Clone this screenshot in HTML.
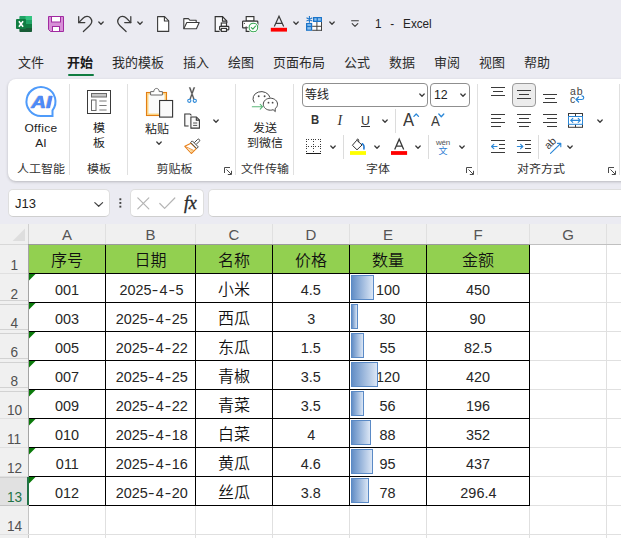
<!DOCTYPE html>
<html lang="zh-CN"><head><meta charset="utf-8"><title>1 - Excel</title>
<style>
*{box-sizing:border-box;margin:0;padding:0}
html,body{width:621px;height:538px;overflow:hidden}
body{background:#ebebf2;font-family:"Liberation Sans","Noto Sans CJK SC",sans-serif;color:#242424;position:relative}
.abs,.t,.ic,.sep,.lbl,.cell,.ch,.rh,.gl,.bl{position:absolute}
.t{white-space:nowrap;line-height:1}
.tab{position:absolute;top:55px;font-size:13px;line-height:15px;color:#2b2b2b;white-space:nowrap}
.tab.on{font-weight:bold;color:#1a1a1a}
.ribbon{position:absolute;left:8px;top:79px;width:640px;height:102px;background:#fff;border-radius:8px;box-shadow:0 1px 3px rgba(0,0,0,.22)}
.sep{width:1px;background:#e0e0e0;top:84px;height:91px}
.lbl{font-size:12px;line-height:14px;color:#333;top:162px;white-space:nowrap;transform:translateX(-50%) scaleY(.92);transform-origin:50% 80%}
.bt{position:absolute;font-size:12px;line-height:14px;color:#222;white-space:nowrap;transform:translateX(-50%) scaleY(.92);transform-origin:50% 80%;text-align:center}
.bt2{line-height:16.300px;transform-origin:50% 0}
.box{position:absolute;background:#fff;border:1px solid #c8c8c8;border-radius:4px}
.grid{position:absolute;left:0;top:224px;width:621px;height:314px;background:#fff}
.ch{top:224px;height:20px;font-size:15px;line-height:22px;text-align:center;color:#555;background:#f0f0f0}
.rh{left:0;width:28px;font-size:15.500px;text-align:center;color:#505050;line-height:1}
.rh span{display:inline-block;transform:scaleX(.88);position:relative;left:.3px}
.gl{background:#e0e0e0}
.bl{background:#000}
.cell{font-size:16px;line-height:29px;text-align:center;color:#111;white-space:nowrap;font-weight:400;padding-top:1px}
.n{display:inline-block;font-size:15.500px;transform:scaleX(.93);transform-origin:50% 50%;color:#262626}
.n i{display:inline-block;font-style:normal;width:8.620px;text-align:center;transform:scaleX(1.35)}
.zh{font-weight:350}
.hd{background:#92d050}
svg{position:absolute;overflow:visible}
</style></head><body>

<!-- title bar icons -->
<svg style="left:16px;top:16px" width="16" height="16" viewBox="0 0 16 16">
  <path d="M4.2 0h11a.8.8 0 0 1 .8.800V4H3.400V.8a.8.8 0 0 1 .8-.8z" fill="#21a366"/>
  <rect x="9.700" y="0" width="6.300" height="4" fill="#33c481"/><path d="M15.200 0a.8.8 0 0 1 .8.800V4H9.700V0z" fill="#33c481"/>
  <rect x="3.400" y="4" width="6.300" height="4" fill="#107c41"/><rect x="9.700" y="4" width="6.300" height="4" fill="#21a366"/>
  <rect x="3.400" y="8" width="6.300" height="4" fill="#185c37"/><rect x="9.700" y="8" width="6.300" height="4" fill="#107c41"/>
  <path d="M3.400 12H16v3.200a.8.800 0 0 1-.8.800h-11a.8.800 0 0 1-.8-.8z" fill="#185c37"/>
  <rect x="0" y="3" width="10" height="10" rx="0.900" fill="#107c41"/>
  <path d="M2.900 5.200 L7.100 10.800 M7.100 5.200 L2.900 10.800" stroke="#fff" stroke-width="1.600" fill="none"/>
</svg>
<svg style="left:48px;top:16px" width="16" height="16" viewBox="0 0 16 16">
  <path d="M0.500 0.500 H15.500 V15.500 H2.500 L0.500 13.500 Z" fill="#d78fd7" stroke="#a12aa1" stroke-width="1"/>
  <rect x="3.500" y="0.500" width="9" height="5.500" fill="#fff" stroke="#a12aa1" stroke-width="1"/>
  <rect x="4.500" y="10.500" width="7" height="5" fill="#fff" stroke="#a12aa1" stroke-width="1"/>
</svg>
<svg style="left:78px;top:16px" width="16" height="16" viewBox="0 0 16 16" fill="none" stroke="#3b3b3b" stroke-width="1.250" stroke-linecap="round" stroke-linejoin="round">
  <path d="M0.700 0.500 V6.600 H6.800"/><path d="M0.700 6.600 L5 2.300 C7.300 0 10.600 -0.300 12.500 2 C14.500 4.500 13.800 7.500 11.500 9.700 L5.400 15.500"/>
</svg>
<svg style="left:98px;top:21px" width="6" height="5" viewBox="0 0 6 5" fill="none" stroke="#3b3b3b" stroke-width="1.300" stroke-linecap="round" stroke-linejoin="round"><path d="M0.800 1 L3 3.200 L5.200 1"/></svg>
<svg style="left:116px;top:16px" width="16" height="16" viewBox="0 0 16 16" fill="none" stroke="#3b3b3b" stroke-width="1.250" stroke-linecap="round" stroke-linejoin="round">
  <g transform="translate(15.500 0) scale(-1 1)"><path d="M0.700 0.500 V6.600 H6.800"/><path d="M0.700 6.600 L5 2.300 C7.300 0 10.600 -0.300 12.500 2 C14.500 4.500 13.800 7.500 11.500 9.700 L5.400 15.500"/></g>
</svg>
<svg style="left:137px;top:21px" width="6" height="5" viewBox="0 0 6 5" fill="none" stroke="#3b3b3b" stroke-width="1.300" stroke-linecap="round" stroke-linejoin="round"><path d="M0.800 1 L3 3.200 L5.200 1"/></svg>
<svg style="left:157px;top:16px" width="13" height="16" viewBox="0 0 13 16" fill="#fff" stroke="#3b3b3b" stroke-width="1.100" stroke-linejoin="round">
  <path d="M0.600 0.600 H7.600 L11.700 4.800 V15.400 H0.600 Z"/><path d="M7.400 0.800 V5 H11.600" fill="none"/>
</svg>
<svg style="left:183px;top:18px" width="17" height="12" viewBox="0 0 17 12" fill="#fff" stroke="#3b3b3b" stroke-width="1.100" stroke-linejoin="round">
  <path d="M0.800 10.800 V0.600 H5.400 L7 2.300 H13.200 V4.500"/><path d="M0.800 10.800 L3.800 4.500 H16.200 L13.400 10.800 Z"/>
</svg>
<svg style="left:214px;top:16px" width="16" height="16" viewBox="0 0 16 16" fill="none" stroke="#333" stroke-width="1.150" stroke-linejoin="miter">
  <path d="M1.200 0.600 H8.500 L12.800 5.100 V15.400 H1.200 Z" fill="#fafafc" stroke="none"/><path d="M5.600 15.400 H1.200 V0.600 H8.500 L12.800 5.100 V7"/><path d="M8.500 0.600 V5.100 H12.800"/>
  <rect x="7.300" y="7" width="5.200" height="3.400" fill="#fff"/><rect x="5.600" y="10.400" width="9.200" height="3.400" rx="0.500" fill="#fff"/><rect x="7.300" y="12.400" width="5.200" height="3" fill="#fff"/>
</svg>
<svg style="left:242px;top:16px" width="17" height="16" viewBox="0 0 17 16" fill="none" stroke="#333" stroke-width="1.150" stroke-linejoin="miter">
  <rect x="4.200" y="0.600" width="7.700" height="4.500" fill="#fff"/><rect x="0.600" y="5.100" width="15.200" height="6.800" rx="0.600" fill="#fff"/><path d="M4.200 10.400 V15.400 H8" fill="#fff"/>
  <rect x="1.900" y="6.900" width="1" height="1" fill="#333" stroke="none"/>
  <circle cx="11.400" cy="11.500" r="4.500" fill="#fff" stroke="#fff" stroke-width="2.200"/>
  <circle cx="11.400" cy="11.500" r="4.300" fill="#fff" stroke="#3aa856" stroke-width="1.100"/><path d="M9.300 11.600 L10.900 13.200 L13.500 10.100" stroke="#3aa856" stroke-width="1.100" stroke-linecap="round" stroke-linejoin="round"/>
</svg>
<svg style="left:270px;top:15px" width="18" height="17" viewBox="0 0 18 17">
  <path d="M4.300 11.600 L9 1.200 L13.700 11.600 M5.900 8.300 H12.100" fill="none" stroke="#3b3b3b" stroke-width="1.200"/>
  <rect x="0.800" y="12.800" width="16.200" height="3.800" fill="#f00"/>
</svg>
<svg style="left:293px;top:21px" width="6" height="5" viewBox="0 0 6 5" fill="none" stroke="#3b3b3b" stroke-width="1.300" stroke-linecap="round" stroke-linejoin="round"><path d="M0.800 1 L3 3.200 L5.200 1"/></svg>
<svg style="left:306px;top:16px" width="16" height="15" viewBox="0 0 16 15">
  <rect x="6.100" y="5.800" width="9.900" height="9" fill="#fff"/>
  <rect x="7" y="1" width="9" height="5" fill="#1b74c9"/>
  <rect x="8.300" y="2.200" width="2.300" height="2.500" fill="#8cc0ee"/><rect x="11.900" y="2.200" width="2.900" height="2.500" fill="#8cc0ee"/>
  <rect x="0" y="7" width="6.200" height="7.800" fill="#1b74c9"/>
  <rect x="1.300" y="8.100" width="3.600" height="1.700" fill="#8cc0ee"/><rect x="1.300" y="11.100" width="3.600" height="2.500" fill="#8cc0ee"/>
  <path d="M6.200 10.300 H16 M10.900 6 V14.800 M15.500 6 V14.800 M6.200 14.300 H16" stroke="#444" stroke-width="1" fill="none"/>
  <path d="M3.400 0 V6.800 M0.500 1.700 L6.300 5.100 M6.300 1.700 L0.500 5.100" stroke="#1b74c9" stroke-width="1.100" fill="none"/>
</svg>
<svg style="left:329px;top:21px" width="6" height="5" viewBox="0 0 6 5" fill="none" stroke="#3b3b3b" stroke-width="1.300" stroke-linecap="round" stroke-linejoin="round"><path d="M0.800 1 L3 3.200 L5.200 1"/></svg>
<svg style="left:351px;top:20px" width="8" height="8" viewBox="0 0 8 8" fill="none" stroke="#3b3b3b" stroke-width="1.100" stroke-linecap="round" stroke-linejoin="round"><path d="M0.600 0.700 H7.400 M1.200 3.600 L4 6.400 L6.800 3.600"/></svg>

<div class="t" style="left:375px;top:16px;font-size:13px;line-height:15px;color:#222;white-space:pre;word-spacing:1.300px;transform:scaleX(.9);transform-origin:0 0">1  -  Excel</div>
<div class="tab" style="left:18px">文件</div>
<div class="tab on" style="left:67px">开始</div>
<div class="tab" style="left:112px">我的模板</div>
<div class="tab" style="left:183px">插入</div>
<div class="tab" style="left:228px">绘图</div>
<div class="tab" style="left:273px">页面布局</div>
<div class="tab" style="left:344px">公式</div>
<div class="tab" style="left:389px">数据</div>
<div class="tab" style="left:434px">审阅</div>
<div class="tab" style="left:479px">视图</div>
<div class="tab" style="left:524px">帮助</div>
<div class="abs" style="left:67.500px;top:73.500px;width:26px;height:2.500px;background:#107c41;border-radius:1px"></div>
<div class="ribbon"></div>
<div class="sep" style="left:69px"></div>
<div class="sep" style="left:127px"></div>
<div class="sep" style="left:235px"></div>
<div class="sep" style="left:293px"></div>
<div class="sep" style="left:477px"></div>
<div class="sep" style="left:619px"></div>
<div class="lbl" style="left:41px">人工智能</div>
<div class="lbl" style="left:99px">模板</div>
<div class="lbl" style="left:174.5px">剪贴板</div>
<div class="lbl" style="left:265px">文件传输</div>
<div class="lbl" style="left:378px">字体</div>
<div class="lbl" style="left:541px">对齐方式</div>
<div class="bt bt2" style="left:41px;top:120.84px"><span style="letter-spacing:.35px">Office</span><br>AI</div>
<div class="bt bt2" style="left:99px;top:120.84px">模<br>板</div>
<div class="bt bt2" style="left:265px;top:120.84px">发送<br>到微信</div>
<div class="bt" style="left:157px;top:122px">粘贴</div>
<div class="box" style="left:302px;top:83px;width:126px;height:24px;border-color:#8f8f8f"></div>
<div class="box" style="left:430px;top:83px;width:40px;height:24px;border-color:#8f8f8f"></div>
<div class="t" style="left:305px;top:89px;font-size:12px;color:#222">等线</div>
<div class="t" style="left:433.500px;top:88px;font-size:13px;color:#222;transform:scaleX(.95);transform-origin:0 0">12</div>
<!-- AI icon -->
<svg style="left:25px;top:85px" width="33" height="33" viewBox="0 0 33 33">
  <path d="M16 31 A14.500 14.500 0 1 1 27.500 25.300 V31 Z" fill="#fff" stroke="#4f9bfa" stroke-width="2" stroke-linejoin="miter"/>
</svg>
<div class="t" style="left:31.100px;top:91.600px;font-size:17.300px;line-height:20px;font-weight:bold;font-style:italic;color:#4b8df8;-webkit-text-stroke:.4px #4b8df8;text-shadow:-.5px -.4px 0 #f7cf6a,.5px .4px 0 #9a5cf0;transform:scaleX(1.185);transform-origin:0 0">AI</div>
<!-- template icon -->
<svg style="left:87px;top:90px" width="24" height="24" viewBox="0 0 24 24" fill="none">
  <rect x="0.500" y="0.500" width="23" height="23" fill="#fff" stroke="#3a3a3a" stroke-width="1"/>
  <rect x="4.500" y="3.500" width="15" height="3.500" fill="#c8c8c8" stroke="#6a6a6a" stroke-width="1"/>
  <rect x="4.500" y="10" width="4.500" height="10.500" fill="#fff" stroke="#6a6a6a" stroke-width="1"/>
  <path d="M12.300 11 H19.600 M12.300 15.500 H19.600 M12.300 20 H19.600" stroke="#7a7a7a" stroke-width="1"/>
</svg>
<!-- paste -->
<svg style="left:145px;top:87px" width="29" height="31" viewBox="0 0 29 31" fill="none">
  <rect x="1.500" y="5.500" width="20" height="23" fill="#fbfbfb" stroke="#e27a10" stroke-width="1.100"/>
  <rect x="2.700" y="6.700" width="17.600" height="20.600" fill="none" stroke="#fbd27f" stroke-width="1.500"/>
  <path d="M5.600 8 V4.600 H8.800 C8.800 0.400 14.200 0.400 14.200 4.600 H17.400 V8 Z" fill="#fff" stroke="#6a6a6a" stroke-width="1"/>
  <rect x="14.600" y="13.500" width="13" height="16.600" fill="#fafafa" stroke="#333" stroke-width="1.100"/>
</svg>
<svg style="left:156px;top:141px" width="6" height="5" viewBox="0 0 6 5" fill="none" stroke="#3b3b3b" stroke-width="1.300" stroke-linecap="round" stroke-linejoin="round"><path d="M0.800 1 L3 3.200 L5.200 1"/></svg>
<!-- cut -->
<svg style="left:186px;top:87px" width="12" height="16" viewBox="0 0 12 16" fill="none">
  <path d="M3.200 0.500 L4.300 0.500 L8.400 12.300 L7.500 12.300 Z M8.800 0.500 L7.700 0.500 L3.600 12.300 L4.500 12.300 Z" fill="#4a4a4a" stroke="#4a4a4a" stroke-width=".4"/>
  <circle cx="3.300" cy="13.800" r="1.600" fill="#fff" stroke="#2b88d8" stroke-width="1.100"/>
  <circle cx="8.800" cy="13.800" r="1.600" fill="#fff" stroke="#2b88d8" stroke-width="1.100"/>
</svg>
<!-- copy -->
<svg style="left:183px;top:112px" width="18" height="17" viewBox="0 0 18 17" fill="none" stroke="#333" stroke-width="1.050" stroke-linejoin="miter">
  <path d="M1.800 1.900 H7 L8.500 3.400 V14 H1.800 Z" fill="#fafafa" stroke="none"/>
  <path d="M5.600 14 H1.800 V1.900 H7 L8.400 3.300"/>
  <path d="M7.900 5 H13.400 L16.400 8 V16.100 H7.900 Z" fill="#fafafa"/>
  <path d="M13.300 5.200 V8.100 H16.200"/>
  <path d="M10.100 11 H14.200 M10.100 13.400 H14.200" stroke="#555" stroke-width="1"/>
</svg>
<svg style="left:213px;top:119px" width="6" height="5" viewBox="0 0 6 5" fill="none" stroke="#3b3b3b" stroke-width="1.300" stroke-linecap="round" stroke-linejoin="round"><path d="M0.800 1 L3 3.200 L5.200 1"/></svg>
<!-- format painter -->
<svg style="left:184px;top:138px" width="17" height="17" viewBox="0 0 17 17" fill="none">
  <path d="M0.800 8.300 L7 5.300 L12.300 10.600 L7.300 15.500 Z" fill="#fff" stroke="#e8801a" stroke-width="1.100" stroke-linejoin="round"/>
  <path d="M4.500 11.300 L9.600 12.200 L7.300 14.600 Z" fill="#fbd590"/>
  <path d="M1.500 8.600 L9.500 12.300" stroke="#e8801a" stroke-width=".8"/>
  <path d="M10.300 4.700 L13.500 1.500 a1.250 1.250 0 0 1 1.800 1.800 L12.100 6.500" fill="#fff" stroke="#444" stroke-width="1"/>
  <path d="M6.700 4.500 L8.300 2.900 L14.300 8.900 L12.700 10.500 Z" fill="#fff" stroke="#444" stroke-width="1" stroke-linejoin="round"/>
</svg>
<!-- dialog launchers -->
<svg style="left:224px;top:167px" width="8" height="8" viewBox="0 0 8 8" fill="none" stroke="#4a4a4a" stroke-width="1"><path d="M0.500 6 V0.500 H6 M2.500 2.500 L7.200 7.200 M7.500 3.800 V7.500 H3.800"/></svg>
<svg style="left:466px;top:167px" width="8" height="8" viewBox="0 0 8 8" fill="none" stroke="#4a4a4a" stroke-width="1"><path d="M0.500 6 V0.500 H6 M2.500 2.500 L7.200 7.200 M7.500 3.800 V7.500 H3.800"/></svg>
<svg style="left:608px;top:167px" width="8" height="8" viewBox="0 0 8 8" fill="none" stroke="#4a4a4a" stroke-width="1"><path d="M0.500 6 V0.500 H6 M2.500 2.500 L7.200 7.200 M7.500 3.800 V7.500 H3.800"/></svg>
<!-- wechat -->
<svg style="left:251px;top:90px" width="28" height="24" viewBox="0 0 28 24" fill="none">
  <path d="M3.050 12.250 A8.600 7.100 0 1 1 18.900 7.200" stroke="#484848" stroke-width="1" stroke-linecap="round"/>
  <circle cx="7.700" cy="6.300" r="0.950" fill="#484848"/><circle cx="13.600" cy="6.300" r="0.950" fill="#484848"/>
  <path d="M19.400 8.200 C15.400 8.200 12.300 10.900 12.300 14.200 C12.300 17.500 15.400 20.200 19.400 20.200 C20.400 20.200 21.300 20 22.100 19.700 L24.300 21.600 L24.100 18.700 C25.600 17.600 26.500 16 26.500 14.200 C26.500 10.900 23.400 8.200 19.400 8.200 Z" fill="#fff" stroke="#484848" stroke-width="1" stroke-linejoin="round"/>
  <circle cx="17.500" cy="12.700" r="0.900" fill="#484848"/><circle cx="21.600" cy="12.700" r="0.900" fill="#484848"/>
  <path d="M1.300 16.700 H11.400 M9.200 14.300 L11.600 16.700 L9.200 19.100" stroke="#5cb87a" stroke-width="1.100" stroke-linecap="round" stroke-linejoin="round"/>
</svg>
<!-- font boxes chevrons -->
<svg style="left:418.700px;top:93px" width="6" height="5" viewBox="0 0 6 5" fill="none" stroke="#3b3b3b" stroke-width="1.300" stroke-linecap="round" stroke-linejoin="round"><path d="M0.800 1 L3 3.200 L5.200 1"/></svg>
<svg style="left:460.300px;top:93px" width="6" height="5" viewBox="0 0 6 5" fill="none" stroke="#3b3b3b" stroke-width="1.300" stroke-linecap="round" stroke-linejoin="round"><path d="M0.800 1 L3 3.200 L5.200 1"/></svg>
<!-- B I U -->
<div class="t" style="left:310.500px;top:112px;font-size:13.500px;line-height:16px;font-weight:bold;color:#333;transform:scaleX(.84);transform-origin:0 0">B</div>
<div class="t" style="left:337.500px;top:113px;font-size:14px;line-height:16px;font-style:italic;font-family:'Liberation Serif',serif;color:#333">I</div>
<div class="t" style="left:361px;top:113px;font-size:13px;line-height:15px;color:#333;transform:scaleX(.95);transform-origin:0 0">U</div>
<div class="abs" style="left:361px;top:125.500px;width:9px;height:1px;background:#333"></div>
<svg style="left:382px;top:119px" width="6" height="5" viewBox="0 0 6 5" fill="none" stroke="#3b3b3b" stroke-width="1.300" stroke-linecap="round" stroke-linejoin="round"><path d="M0.800 1 L3 3.200 L5.200 1"/></svg>
<div class="abs" style="left:395px;top:109px;width:1px;height:24px;background:#dcdcdc"></div>
<!-- grow / shrink font -->
<div class="t" style="left:403px;top:110px;font-size:18px;line-height:20px;color:#3a3a3a;transform:scaleX(.92);transform-origin:0 0">A</div>
<svg style="left:412.700px;top:113.300px" width="7" height="5" viewBox="0 0 7 5" fill="none" stroke="#2b88d8" stroke-width="1.300" stroke-linecap="round" stroke-linejoin="round"><path d="M0.900 3.400 L3.200 1 L5.500 3.400"/></svg>
<div class="t" style="left:430.500px;top:113px;font-size:14px;line-height:16px;color:#3a3a3a;transform:scaleX(.95);transform-origin:0 0">A</div>
<svg style="left:438px;top:113px" width="7" height="5" viewBox="0 0 7 5" fill="none" stroke="#2b88d8" stroke-width="1.300" stroke-linecap="round" stroke-linejoin="round"><path d="M0.800 1 L3.300 3.800 L5.800 1"/></svg>
<!-- borders -->
<svg style="left:306px;top:139px" width="16" height="16" viewBox="0 0 16 16" fill="none" shape-rendering="crispEdges">
  <path d="M0 0h1v1h-1zM0 2h1v1h-1zM0 5h1v1h-1zM0 7h1v1h-1zM0 9h1v1h-1zM0 12h1v1h-1zM2 0h1v1h-1zM2 7h1v1h-1zM5 0h1v1h-1zM5 7h1v1h-1zM7 0h1v1h-1zM7 2h1v1h-1zM7 5h1v1h-1zM7 7h1v1h-1zM7 9h1v1h-1zM7 12h1v1h-1zM9 0h1v1h-1zM9 7h1v1h-1zM12 0h1v1h-1zM12 7h1v1h-1zM14 0h1v1h-1zM14 2h1v1h-1zM14 5h1v1h-1zM14 7h1v1h-1zM14 9h1v1h-1zM14 12h1v1h-1z" fill="#3a3a3a"/>
  <path d="M0 14 H15 V15 H0 Z" fill="#1a1a1a"/>
</svg>
<svg style="left:329.500px;top:145px" width="6" height="5" viewBox="0 0 6 5" fill="none" stroke="#3b3b3b" stroke-width="1.300" stroke-linecap="round" stroke-linejoin="round"><path d="M0.800 1 L3 3.200 L5.200 1"/></svg>
<div class="abs" style="left:343px;top:135px;width:1px;height:24px;background:#dcdcdc"></div>
<!-- fill color -->
<svg style="left:350px;top:138px" width="17" height="17" viewBox="0 0 17 17" fill="none">
  <path d="M6.800 2.200 L12 7 L7 11.800 L2.400 7.300 Z" fill="#fff" stroke="#333" stroke-width="1" stroke-linejoin="round"/>
  <path d="M8.700 4.200 V2.300 C8.700 0.700 6.800 0.700 6.800 2.200" stroke="#333" stroke-width="1"/>
  <path d="M12.300 5.700 C13.800 6.800 14.400 8.600 13.900 11" stroke="#1e78d2" stroke-width="1.500" stroke-linecap="round"/>
  <rect x="0" y="13.100" width="16" height="3.800" fill="#ff0"/>
</svg>
<svg style="left:374px;top:145px" width="6" height="5" viewBox="0 0 6 5" fill="none" stroke="#3b3b3b" stroke-width="1.300" stroke-linecap="round" stroke-linejoin="round"><path d="M0.800 1 L3 3.200 L5.200 1"/></svg>
<!-- font color -->
<svg style="left:390px;top:138px" width="18" height="17" viewBox="0 0 18 17">
  <path d="M4.700 11.600 L9.200 1.200 L13.700 11.600 M6.200 8.100 H12.200" fill="none" stroke="#3a3a3a" stroke-width="1.300"/>
  <rect x="1" y="13.100" width="16.100" height="3.800" fill="#f00"/>
</svg>
<svg style="left:414.500px;top:145px" width="6" height="5" viewBox="0 0 6 5" fill="none" stroke="#3b3b3b" stroke-width="1.300" stroke-linecap="round" stroke-linejoin="round"><path d="M0.800 1 L3 3.200 L5.200 1"/></svg>
<div class="abs" style="left:428px;top:135px;width:1px;height:24px;background:#dcdcdc"></div>
<!-- phonetic -->
<div class="t" style="left:436px;top:139px;font-size:8px;line-height:8px;color:#555;letter-spacing:-.2px">wén</div>
<div class="t" style="left:438.500px;top:146px;font-size:9px;line-height:10px;color:#2b7cd3">文</div>
<svg style="left:458.500px;top:145px" width="6" height="5" viewBox="0 0 6 5" fill="none" stroke="#3b3b3b" stroke-width="1.300" stroke-linecap="round" stroke-linejoin="round"><path d="M0.800 1 L3 3.200 L5.200 1"/></svg>
<!-- alignment row 1 -->
<svg style="left:491px;top:86px" width="14" height="10" viewBox="0 0 14 10" stroke="#3a3a3a" stroke-width="1" fill="none"><path d="M0 1.500 H14 M2 5.500 H12 M0 9.500 H14"/></svg>
<div class="abs" style="left:512px;top:83px;width:24px;height:24px;background:#ececec;border:1px solid #9a9a9a;border-radius:4px"></div>
<svg style="left:517px;top:90px" width="14" height="10" viewBox="0 0 14 10" stroke="#3a3a3a" stroke-width="1" fill="none"><path d="M0 0.500 H14 M2 4.500 H12 M0 8.500 H14"/></svg>
<svg style="left:543px;top:93px" width="14" height="10" viewBox="0 0 14 10" stroke="#3a3a3a" stroke-width="1" fill="none"><path d="M0 1.500 H14 M2 5.500 H12 M0 9.500 H14"/></svg>
<!-- alignment row 2 -->
<svg style="left:491px;top:114px" width="14" height="13" viewBox="0 0 14 13" stroke="#3a3a3a" stroke-width="1" fill="none"><path d="M0 0.500 H14 M0 4.500 H10 M0 8.500 H14 M0 12.500 H10"/></svg>
<svg style="left:517px;top:114px" width="14" height="13" viewBox="0 0 14 13" stroke="#3a3a3a" stroke-width="1" fill="none"><path d="M0 0.500 H14 M2 4.500 H12 M0 8.500 H14 M2 12.500 H12"/></svg>
<svg style="left:543px;top:114px" width="14" height="13" viewBox="0 0 14 13" stroke="#3a3a3a" stroke-width="1" fill="none"><path d="M0 0.500 H14 M4 4.500 H14 M0 8.500 H14 M4 12.500 H14"/></svg>
<!-- indent -->
<svg style="left:491px;top:140px" width="14" height="13" viewBox="0 0 14 13" fill="none"><path d="M0 0.500 H14 M8 4.500 H14 M8 8.500 H14 M0 12.500 H14" stroke="#3a3a3a" stroke-width="1"/><path d="M0.700 6.500 H6 M2.800 4.300 L0.600 6.500 L2.800 8.700" stroke="#2b88d8" stroke-width="1.200" stroke-linecap="round" stroke-linejoin="round"/></svg>
<svg style="left:517px;top:140px" width="14" height="13" viewBox="0 0 14 13" fill="none"><path d="M0 0.500 H14 M8 4.500 H14 M8 8.500 H14 M0 12.500 H14" stroke="#3a3a3a" stroke-width="1"/><path d="M0.400 6.500 H5.700 M3.600 4.300 L5.800 6.500 L3.600 8.700" stroke="#2b88d8" stroke-width="1.200" stroke-linecap="round" stroke-linejoin="round"/></svg>
<div class="abs" style="left:538px;top:135px;width:1px;height:24px;background:#dcdcdc"></div>
<!-- orientation -->
<svg style="left:544px;top:138px" width="19" height="17" viewBox="0 0 19 17" fill="none">
  <text x="0" y="0" transform="translate(4.600 11.800) rotate(-45)" font-family="'Liberation Sans',sans-serif" font-size="10.500" fill="#3a3a3a" stroke="none">ab</text>
  <path d="M6.500 15.300 L16.700 5.500 M13.500 5.400 H16.800 V8.700" stroke="#2b88d8" stroke-width="1.100" stroke-linecap="round" stroke-linejoin="round"/>
</svg>
<svg style="left:566.500px;top:145px" width="6" height="5" viewBox="0 0 6 5" fill="none" stroke="#3b3b3b" stroke-width="1.300" stroke-linecap="round" stroke-linejoin="round"><path d="M0.800 1 L3 3.200 L5.200 1"/></svg>
<!-- wrap text -->
<div class="t" style="left:570px;top:86px;font-size:10.500px;line-height:7.500px;color:#444;letter-spacing:.8px;padding-top:2px">ab<br>c</div>
<svg style="left:575px;top:95px" width="10" height="8" viewBox="0 0 10 8" fill="none" stroke="#2b88d8" stroke-width="1.200" stroke-linecap="round" stroke-linejoin="round"><path d="M1.200 4.500 H6.600 C9.400 4.500 9.400 1 7 0.800 M3.600 2 L1 4.500 L3.600 7"/></svg>
<!-- merge & center -->
<svg style="left:568px;top:113px" width="15" height="15" viewBox="0 0 15 15" fill="none">
  <rect x="0.500" y="0.500" width="14" height="13.800" fill="#fff" stroke="#3a3a3a" stroke-width="1"/>
  <path d="M7.500 0.500 V3.500 M7.500 11.300 V14.300" stroke="#3a3a3a" stroke-width="1"/>
  <rect x="0.500" y="3.500" width="14" height="7.800" fill="#fff" stroke="#2b88d8" stroke-width="1"/>
  <path d="M2.800 7.400 H12.200 M4.800 5.400 L2.700 7.400 L4.800 9.400 M10.200 5.400 L12.300 7.400 L10.200 9.400" stroke="#2b88d8" stroke-width="1.100" stroke-linecap="round" stroke-linejoin="round"/>
</svg>
<svg style="left:596.500px;top:119px" width="6" height="5" viewBox="0 0 6 5" fill="none" stroke="#3b3b3b" stroke-width="1.300" stroke-linecap="round" stroke-linejoin="round"><path d="M0.800 1 L3 3.200 L5.200 1"/></svg>

<div class="box" style="left:8px;top:189px;width:102px;height:28px;border-color:#dedede #dedede #cfcfcf;border-radius:5px"></div>
<div class="t" style="left:15px;top:197px;font-size:13px;color:#222">J13</div>
<div class="box" style="left:130px;top:189px;width:74px;height:28px;border-color:#dedede #dedede #cfcfcf;border-radius:5px"></div>
<div class="box" style="left:208px;top:189px;width:430px;height:28px;border-color:#dedede #dedede #cfcfcf;border-radius:5px"></div>
<svg style="left:94px;top:201px" width="10" height="7" viewBox="0 0 10 7" fill="none" stroke="#444" stroke-width="1.200" stroke-linecap="round" stroke-linejoin="round"><path d="M0.800 1.600 L4.700 5.300 L8.600 1.600"/></svg>
<svg style="left:119px;top:198px" width="3" height="10" viewBox="0 0 3 10" fill="#444"><rect x="0.400" y="0.300" width="1.900" height="1.900"/><rect x="0.400" y="4" width="1.900" height="1.900"/><rect x="0.400" y="7.700" width="1.900" height="1.900"/></svg>
<svg style="left:137px;top:197px" width="13" height="13" viewBox="0 0 13 13" fill="none" stroke="#b4b4b4" stroke-width="1.200" stroke-linecap="round"><path d="M0.800 0.800 L11.800 11.800 M11.800 0.800 L0.800 11.800"/></svg>
<svg style="left:159px;top:197px" width="17" height="13" viewBox="0 0 17 13" fill="none" stroke="#b4b4b4" stroke-width="1.200" stroke-linecap="round" stroke-linejoin="round"><path d="M0.800 6.500 L5.600 11.300 L15.800 1"/></svg>
<div class="t" style="left:184px;top:193px;font-size:18px;line-height:20px;font-style:italic;font-family:'Liberation Serif',serif;color:#2a2a2a;letter-spacing:-.3px;-webkit-text-stroke:.35px #2a2a2a">fx</div>

<div class="grid"></div>
<div class="abs" style="left:0;top:224px;width:621px;height:20px;background:#f0f0f0"></div>
<div class="abs" style="left:0;top:244px;width:28px;height:294px;background:#f0f0f0"></div>
<svg style="left:0;top:224px" width="28" height="20"><path d="M25 4.600 L25 17 L12.600 17 Z" fill="#dedede"/></svg>
<div class="gl" style="left:105px;top:224px;width:1px;height:314px"></div>
<div class="gl" style="left:195px;top:224px;width:1px;height:314px"></div>
<div class="gl" style="left:272px;top:224px;width:1px;height:314px"></div>
<div class="gl" style="left:349px;top:224px;width:1px;height:314px"></div>
<div class="gl" style="left:426px;top:224px;width:1px;height:314px"></div>
<div class="gl" style="left:529px;top:224px;width:1px;height:314px"></div>
<div class="gl" style="left:606px;top:224px;width:1px;height:314px"></div>
<div class="gl" style="left:28px;top:224px;width:1px;height:20px;background:#d0d0d0"></div>
<div class="gl" style="left:28px;top:244px;width:1px;height:294px;background:#c4c4c4"></div>
<div class="gl" style="left:0;top:244px;width:621px;height:1px"></div>
<div class="gl" style="left:0;top:273px;width:621px;height:1px"></div>
<div class="gl" style="left:0;top:302px;width:621px;height:1px"></div>
<div class="gl" style="left:0;top:331px;width:621px;height:1px"></div>
<div class="gl" style="left:0;top:360px;width:621px;height:1px"></div>
<div class="gl" style="left:0;top:389px;width:621px;height:1px"></div>
<div class="gl" style="left:0;top:418px;width:621px;height:1px"></div>
<div class="gl" style="left:0;top:447px;width:621px;height:1px"></div>
<div class="gl" style="left:0;top:476px;width:621px;height:1px"></div>
<div class="gl" style="left:0;top:505px;width:621px;height:1px"></div>
<div class="gl" style="left:0;top:534px;width:621px;height:1px"></div>
<div class="gl" style="left:0;top:244px;width:28px;height:1px;background:#d8d8d8"></div>
<div class="gl" style="left:28px;top:244px;width:593px;height:1px;background:#c0c0c0"></div>
<div class="gl" style="left:28px;top:244px;width:502px;height:1px;background:#9a9a9a"></div>
<div class="gl" style="left:28px;top:245px;width:1px;height:261px;background:#a4a4a4"></div>
<div class="ch" style="left:29px;width:76px">A</div>
<div class="ch" style="left:106px;width:89px">B</div>
<div class="ch" style="left:196px;width:76px">C</div>
<div class="ch" style="left:273px;width:76px">D</div>
<div class="ch" style="left:350px;width:76px">E</div>
<div class="ch" style="left:427px;width:102px">F</div>
<div class="ch" style="left:530px;width:76px">G</div>
<div class="rh" style="top:245px;height:28px;padding-top:12px"><span>1</span></div>
<div class="rh" style="top:274px;height:28px;padding-top:12px"><span>2</span></div>
<div class="rh" style="top:303px;height:28px;padding-top:12px"><span>4</span></div>
<div class="rh" style="top:332px;height:28px;padding-top:12px"><span>6</span></div>
<div class="rh" style="top:361px;height:28px;padding-top:12px"><span>8</span></div>
<div class="rh" style="top:390px;height:28px;padding-top:12px"><span>10</span></div>
<div class="rh" style="top:419px;height:28px;padding-top:12px"><span>11</span></div>
<div class="rh" style="top:448px;height:28px;padding-top:12px"><span>12</span></div>
<div class="rh" style="top:477px;height:28px;padding-top:12px;color:#217346;background:#e1e1e1;box-shadow:inset 0 1px 0 #cdcdcd, 0 1px 0 #c4c4c4"><span>13</span></div>
<div class="rh" style="top:506px;height:28px;padding-top:12px"><span>14</span></div>
<div class="abs" style="left:0;top:300px;width:28px;height:5px;background:#f0f0f0;border-top:1px solid #d2d2d2;border-bottom:1px solid #d2d2d2"></div>
<div class="abs" style="left:0;top:329px;width:28px;height:5px;background:#f0f0f0;border-top:1px solid #d2d2d2;border-bottom:1px solid #d2d2d2"></div>
<div class="abs" style="left:0;top:358px;width:28px;height:5px;background:#f0f0f0;border-top:1px solid #d2d2d2;border-bottom:1px solid #d2d2d2"></div>
<div class="abs" style="left:0;top:387px;width:28px;height:5px;background:#f0f0f0;border-top:1px solid #d2d2d2;border-bottom:1px solid #d2d2d2"></div>
<div class="cell hd" style="left:29px;top:245px;width:76px;height:28px"><span class="zh">序号</span></div>
<div class="cell hd" style="left:106px;top:245px;width:89px;height:28px"><span class="zh">日期</span></div>
<div class="cell hd" style="left:196px;top:245px;width:76px;height:28px"><span class="zh">名称</span></div>
<div class="cell hd" style="left:273px;top:245px;width:76px;height:28px"><span class="zh">价格</span></div>
<div class="cell hd" style="left:350px;top:245px;width:76px;height:28px"><span class="zh">数量</span></div>
<div class="cell hd" style="left:427px;top:245px;width:102px;height:28px"><span class="zh">金额</span></div>
<div class="cell" style="left:29px;top:274px;width:76px;height:28px"><span class="n">001</span></div>
<div class="cell" style="left:106px;top:274px;width:89px;height:28px;padding-left:2px"><span class="n">2025<i>-</i>4<i>-</i>5</span></div>
<div class="cell" style="left:196px;top:274px;width:76px;height:28px"><span class="zh">小米</span></div>
<div class="cell" style="left:273px;top:274px;width:76px;height:28px"><span class="n">4.5</span></div>
<div class="cell" style="left:350px;top:274px;width:76px;height:28px"><span class="n">100</span></div>
<div class="cell" style="left:427px;top:274px;width:102px;height:28px"><span class="n">450</span></div>
<div class="abs" style="left:351px;top:275px;width:23px;height:25px;border:1px solid #5a8ac6;background:linear-gradient(90deg,#638ec6,#dbe6f5)"></div>
<svg style="left:29px;top:274px" width="7" height="7"><path d="M0 0 L6.500 0 L0 6.500 Z" fill="#0b7a0b"/></svg>
<div class="cell" style="left:29px;top:303px;width:76px;height:28px"><span class="n">003</span></div>
<div class="cell" style="left:106px;top:303px;width:89px;height:28px;padding-left:2px"><span class="n">2025<i>-</i>4<i>-</i>25</span></div>
<div class="cell" style="left:196px;top:303px;width:76px;height:28px"><span class="zh">西瓜</span></div>
<div class="cell" style="left:273px;top:303px;width:76px;height:28px"><span class="n">3</span></div>
<div class="cell" style="left:350px;top:303px;width:76px;height:28px"><span class="n">30</span></div>
<div class="cell" style="left:427px;top:303px;width:102px;height:28px"><span class="n">90</span></div>
<div class="abs" style="left:351px;top:304px;width:7px;height:25px;border:1px solid #5a8ac6;background:linear-gradient(90deg,#638ec6,#dbe6f5)"></div>
<svg style="left:29px;top:303px" width="7" height="7"><path d="M0 0 L6.500 0 L0 6.500 Z" fill="#0b7a0b"/></svg>
<div class="cell" style="left:29px;top:332px;width:76px;height:28px"><span class="n">005</span></div>
<div class="cell" style="left:106px;top:332px;width:89px;height:28px;padding-left:2px"><span class="n">2025<i>-</i>4<i>-</i>22</span></div>
<div class="cell" style="left:196px;top:332px;width:76px;height:28px"><span class="zh">东瓜</span></div>
<div class="cell" style="left:273px;top:332px;width:76px;height:28px"><span class="n">1.5</span></div>
<div class="cell" style="left:350px;top:332px;width:76px;height:28px"><span class="n">55</span></div>
<div class="cell" style="left:427px;top:332px;width:102px;height:28px"><span class="n">82.5</span></div>
<div class="abs" style="left:351px;top:333px;width:13px;height:25px;border:1px solid #5a8ac6;background:linear-gradient(90deg,#638ec6,#dbe6f5)"></div>
<svg style="left:29px;top:332px" width="7" height="7"><path d="M0 0 L6.500 0 L0 6.500 Z" fill="#0b7a0b"/></svg>
<div class="cell" style="left:29px;top:361px;width:76px;height:28px"><span class="n">007</span></div>
<div class="cell" style="left:106px;top:361px;width:89px;height:28px;padding-left:2px"><span class="n">2025<i>-</i>4<i>-</i>25</span></div>
<div class="cell" style="left:196px;top:361px;width:76px;height:28px"><span class="zh">青椒</span></div>
<div class="cell" style="left:273px;top:361px;width:76px;height:28px"><span class="n">3.5</span></div>
<div class="cell" style="left:350px;top:361px;width:76px;height:28px"><span class="n">120</span></div>
<div class="cell" style="left:427px;top:361px;width:102px;height:28px"><span class="n">420</span></div>
<div class="abs" style="left:351px;top:362px;width:27px;height:25px;border:1px solid #5a8ac6;background:linear-gradient(90deg,#638ec6,#dbe6f5)"></div>
<svg style="left:29px;top:361px" width="7" height="7"><path d="M0 0 L6.500 0 L0 6.500 Z" fill="#0b7a0b"/></svg>
<div class="cell" style="left:29px;top:390px;width:76px;height:28px"><span class="n">009</span></div>
<div class="cell" style="left:106px;top:390px;width:89px;height:28px;padding-left:2px"><span class="n">2025<i>-</i>4<i>-</i>22</span></div>
<div class="cell" style="left:196px;top:390px;width:76px;height:28px"><span class="zh">青菜</span></div>
<div class="cell" style="left:273px;top:390px;width:76px;height:28px"><span class="n">3.5</span></div>
<div class="cell" style="left:350px;top:390px;width:76px;height:28px"><span class="n">56</span></div>
<div class="cell" style="left:427px;top:390px;width:102px;height:28px"><span class="n">196</span></div>
<div class="abs" style="left:351px;top:391px;width:13px;height:25px;border:1px solid #5a8ac6;background:linear-gradient(90deg,#638ec6,#dbe6f5)"></div>
<svg style="left:29px;top:390px" width="7" height="7"><path d="M0 0 L6.500 0 L0 6.500 Z" fill="#0b7a0b"/></svg>
<div class="cell" style="left:29px;top:419px;width:76px;height:28px"><span class="n">010</span></div>
<div class="cell" style="left:106px;top:419px;width:89px;height:28px;padding-left:2px"><span class="n">2025<i>-</i>4<i>-</i>18</span></div>
<div class="cell" style="left:196px;top:419px;width:76px;height:28px"><span class="zh">白菜</span></div>
<div class="cell" style="left:273px;top:419px;width:76px;height:28px"><span class="n">4</span></div>
<div class="cell" style="left:350px;top:419px;width:76px;height:28px"><span class="n">88</span></div>
<div class="cell" style="left:427px;top:419px;width:102px;height:28px"><span class="n">352</span></div>
<div class="abs" style="left:351px;top:420px;width:20px;height:25px;border:1px solid #5a8ac6;background:linear-gradient(90deg,#638ec6,#dbe6f5)"></div>
<svg style="left:29px;top:419px" width="7" height="7"><path d="M0 0 L6.500 0 L0 6.500 Z" fill="#0b7a0b"/></svg>
<div class="cell" style="left:29px;top:448px;width:76px;height:28px"><span class="n">011</span></div>
<div class="cell" style="left:106px;top:448px;width:89px;height:28px;padding-left:2px"><span class="n">2025<i>-</i>4<i>-</i>16</span></div>
<div class="cell" style="left:196px;top:448px;width:76px;height:28px"><span class="zh">黄瓜</span></div>
<div class="cell" style="left:273px;top:448px;width:76px;height:28px"><span class="n">4.6</span></div>
<div class="cell" style="left:350px;top:448px;width:76px;height:28px"><span class="n">95</span></div>
<div class="cell" style="left:427px;top:448px;width:102px;height:28px"><span class="n">437</span></div>
<div class="abs" style="left:351px;top:449px;width:22px;height:25px;border:1px solid #5a8ac6;background:linear-gradient(90deg,#638ec6,#dbe6f5)"></div>
<svg style="left:29px;top:448px" width="7" height="7"><path d="M0 0 L6.500 0 L0 6.500 Z" fill="#0b7a0b"/></svg>
<div class="cell" style="left:29px;top:477px;width:76px;height:28px"><span class="n">012</span></div>
<div class="cell" style="left:106px;top:477px;width:89px;height:28px;padding-left:2px"><span class="n">2025<i>-</i>4<i>-</i>20</span></div>
<div class="cell" style="left:196px;top:477px;width:76px;height:28px"><span class="zh">丝瓜</span></div>
<div class="cell" style="left:273px;top:477px;width:76px;height:28px"><span class="n">3.8</span></div>
<div class="cell" style="left:350px;top:477px;width:76px;height:28px"><span class="n">78</span></div>
<div class="cell" style="left:427px;top:477px;width:102px;height:28px"><span class="n">296.4</span></div>
<div class="abs" style="left:351px;top:478px;width:18px;height:25px;border:1px solid #5a8ac6;background:linear-gradient(90deg,#638ec6,#dbe6f5)"></div>
<svg style="left:29px;top:477px" width="7" height="7"><path d="M0 0 L6.500 0 L0 6.500 Z" fill="#0b7a0b"/></svg>

<div class="bl" style="left:29px;top:273px;width:501px;height:1px"></div>
<div class="bl" style="left:29px;top:302px;width:501px;height:1px"></div>
<div class="bl" style="left:29px;top:331px;width:501px;height:1px"></div>
<div class="bl" style="left:29px;top:360px;width:501px;height:1px"></div>
<div class="bl" style="left:29px;top:389px;width:501px;height:1px"></div>
<div class="bl" style="left:29px;top:418px;width:501px;height:1px"></div>
<div class="bl" style="left:29px;top:447px;width:501px;height:1px"></div>
<div class="bl" style="left:29px;top:476px;width:501px;height:1px"></div>
<div class="bl" style="left:29px;top:505px;width:501px;height:1px"></div>
<div class="bl" style="left:105px;top:245px;width:1px;height:261px"></div>
<div class="bl" style="left:195px;top:245px;width:1px;height:261px"></div>
<div class="bl" style="left:272px;top:245px;width:1px;height:261px"></div>
<div class="bl" style="left:349px;top:245px;width:1px;height:261px"></div>
<div class="bl" style="left:426px;top:245px;width:1px;height:261px"></div>
<div class="bl" style="left:529px;top:245px;width:1px;height:261px"></div>
<div class="bl" style="left:29px;top:505px;width:501px;height:1px"></div>
<div class="abs" style="left:27px;top:477px;width:2px;height:28px;background:#217346"></div>
</body></html>
